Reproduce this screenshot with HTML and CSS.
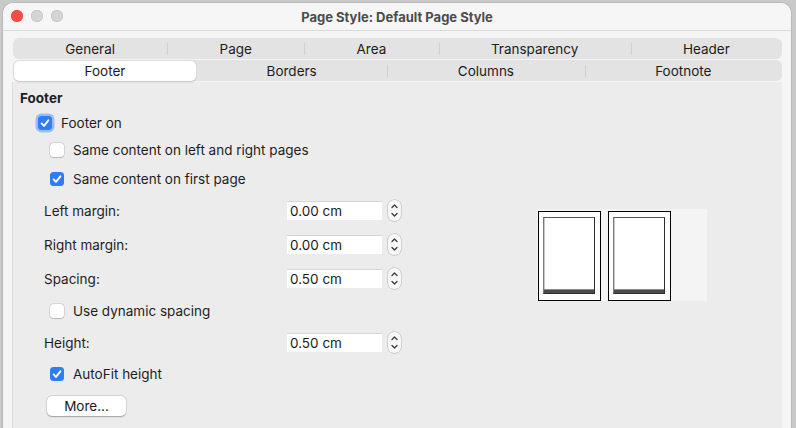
FILE: index.html
```html
<!DOCTYPE html>
<html lang="en">
<head>
<meta charset="utf-8">
<title>Page Style: Default Page Style</title>
<link rel="stylesheet" href="styles.css">
</head>
<body>
<div class="window">
  <div class="titlebar">
    <div class="lights">
      <span class="light red"></span>
      <span class="light"></span>
      <span class="light"></span>
    </div>
    <div class="title">Page Style: Default Page Style</div>
  </div>
  <div class="dialog">
    <div class="tabrow">
      <div class="tab">General</div>
      <div class="tab">Page</div>
      <div class="tab">Area</div>
      <div class="tab">Transparency</div>
      <div class="tab">Header</div>
    </div>
    <div class="tabrow">
      <div class="tab selected">Footer</div>
      <div class="tab nosep">Borders</div>
      <div class="tab">Columns</div>
      <div class="tab">Footnote</div>
    </div>
    <div class="panel">
      <div class="form">
        <div class="heading">Footer</div>
        <div class="check lvl1">
          <span class="cb on focus"><svg viewBox="0 0 14 14"><path d="M3.6 7.4 L6 9.9 L10.4 4.3"/></svg></span>
          <span>Footer on</span>
        </div>
        <div class="check lvl2">
          <span class="cb"></span>
          <span>Same content on left and right pages</span>
        </div>
        <div class="check lvl2">
          <span class="cb on"><svg viewBox="0 0 14 14"><path d="M3.6 7.4 L6 9.9 L10.4 4.3"/></svg></span>
          <span>Same content on first page</span>
        </div>
        <div class="field">
          <span class="label">Left margin:</span>
          <span class="input">0.00 cm</span>
          <span class="spin"><svg viewBox="0 0 13 21"><path d="M4 7.5 L6.5 5 L9 7.5 M4 13.5 L6.5 16 L9 13.5"/></svg></span>
        </div>
        <div class="field">
          <span class="label">Right margin:</span>
          <span class="input">0.00 cm</span>
          <span class="spin"><svg viewBox="0 0 13 21"><path d="M4 7.5 L6.5 5 L9 7.5 M4 13.5 L6.5 16 L9 13.5"/></svg></span>
        </div>
        <div class="field">
          <span class="label">Spacing:</span>
          <span class="input">0.50 cm</span>
          <span class="spin"><svg viewBox="0 0 13 21"><path d="M4 7.5 L6.5 5 L9 7.5 M4 13.5 L6.5 16 L9 13.5"/></svg></span>
        </div>
        <div class="check lvl2">
          <span class="cb"></span>
          <span>Use dynamic spacing</span>
        </div>
        <div class="field">
          <span class="label">Height:</span>
          <span class="input">0.50 cm</span>
          <span class="spin"><svg viewBox="0 0 13 21"><path d="M4 7.5 L6.5 5 L9 7.5 M4 13.5 L6.5 16 L9 13.5"/></svg></span>
        </div>
        <div class="check lvl2">
          <span class="cb on"><svg viewBox="0 0 14 14"><path d="M3.6 7.4 L6 9.9 L10.4 4.3"/></svg></span>
          <span>AutoFit height</span>
        </div>
        <div class="buttonrow">
          <span class="button">More...</span>
        </div>
      </div>
      <div class="preview">
        <div class="page"><div class="inner"><div class="foot"></div></div></div>
        <div class="page"><div class="inner"><div class="foot"></div></div></div>
      </div>
    </div>
  </div>
</div>
</body>
</html>
```

FILE: styles.css
```css
* { box-sizing: border-box; }
html, body {
  margin: 0;
  padding: 0;
  width: 796px;
  height: 428px;
  overflow: hidden;
}
body {
  background: #c9c9c9;
  font-family: Inter, "Liberation Sans", sans-serif;
  font-size: 13.5px;
  color: #1e1e1e;
}
.window {
  margin: 3px 0 0 3px;
  width: 788px;
  height: 440px;
  border-radius: 10px 10px 0 0;
  overflow: hidden;
  background: #f5f5f5;
  box-shadow: 0 0 0 0.5px #a8a8a8;
}
.titlebar {
  height: 28px;
  border-bottom: 1px solid #dadada;
  background: #f6f6f6;
  display: flex;
  align-items: center;
  justify-content: center;
  position: relative;
}
.lights {
  position: absolute;
  left: 8px;
  top: 7px;
  display: flex;
  gap: 8px;
}
.light {
  width: 12px;
  height: 12px;
  border-radius: 50%;
  background: #d4d4d4;
  box-shadow: inset 0 0 0 0.5px #b9b9b9;
}
.light.red {
  background: #fe4d49;
  box-shadow: inset 0 0 0 0.5px #e0443e;
}
.title {
  font-weight: 700;
  color: #4b4b4b;
  font-size: 13px;
}
.dialog {
  padding: 7px 9px 0 9px;
  height: 412px;
}
.tabrow {
  display: flex;
  height: 21px;
  margin: 0 0 1px 1px;
  background: #e3e3e3;
  border-radius: 6px;
  align-items: stretch;
}
.tab {
  flex: 1 1 auto;
  padding: 0 20px;
  display: flex;
  align-items: center;
  justify-content: center;
  position: relative;
  color: #1c1c1c;
}
.tab + .tab::before {
  content: "";
  position: absolute;
  left: 0;
  top: 5px;
  height: 12px;
  width: 1px;
  background: #cfcfcf;
}
.tab.nosep::before { display: none; }
.tab.selected {
  background: #fff;
  border-radius: 5px;
  margin: 1px 0 0 1px;
  box-shadow: 0 0.5px 1.5px rgba(0,0,0,0.2);
}
.panel {
  margin-top: 1px;
  height: 346px;
  background: #ececec;
  border-left: 1px solid #dcdcdc;
  display: flex;
  align-items: flex-start;
}
.form {
  width: 400px;
  padding-top: 3px;
  display: grid;
  grid-template-rows: 25px 26px 28px 30px 33px 35px 33px 32px 31px 32px 32px;
  align-items: center;
}
.heading {
  padding-left: 7px;
  font-weight: 700;
}
.check {
  display: flex;
  align-items: center;
  gap: 9px;
}
.check.lvl1 { padding-left: 25px; }
.check.lvl2 { padding-left: 37px; }
.cb {
  width: 14px;
  height: 14px;
  border-radius: 3.5px;
  background: #fff;
  box-shadow: 0 0 0 0.5px rgba(0,0,0,0.18), 0 0.5px 1px rgba(0,0,0,0.15);
  display: flex;
}
.cb.on {
  background: #2f7cf6;
  box-shadow: none;
}
.cb.focus {
  box-shadow: 0 0 0 2.5px rgba(90,150,245,0.55);
}
.cb svg {
  width: 14px;
  height: 14px;
  fill: none;
  stroke: #fff;
  stroke-width: 1.9;
  stroke-linecap: round;
  stroke-linejoin: round;
}
.field {
  display: flex;
  align-items: center;
  padding-left: 31px;
}
.label {
  width: 243px;
}
.input {
  width: 95px;
  height: 19px;
  background: #fff;
  border-top: 1px solid #d6d6d6;
  padding-left: 3px;
  display: flex;
  align-items: center;
  color: #1a1a1a;
}
.spin {
  width: 13px;
  height: 21px;
  margin-left: 6px;
  border-radius: 6px;
  background: #f8f8f8;
  box-shadow: 0 0 0 0.5px #b5b5b5, 0 0.5px 1px rgba(0,0,0,0.15);
  display: flex;
}
.spin svg {
  width: 13px;
  height: 21px;
  fill: none;
  stroke: #3a3a3a;
  stroke-width: 1.3;
  stroke-linecap: round;
  stroke-linejoin: round;
}
.buttonrow {
  padding-left: 34px;
}
.button {
  width: 79px;
  height: 20px;
  background: #fff;
  border-radius: 5px;
  box-shadow: 0 0 0 0.5px rgba(0,0,0,0.12), 0 0.5px 1.5px rgba(0,0,0,0.28);
  display: flex;
  align-items: center;
  justify-content: center;
  color: #1a1a1a;
}
.preview {
  margin: 127px 0 0 124px;
  width: 170px;
  height: 92px;
  background: #f4f4f4;
  padding: 2px 0 0 1px;
  display: flex;
  gap: 7px;
  align-items: flex-start;
}
.page {
  width: 63px;
  height: 90px;
  border: 1px solid #000;
  background: #fff;
  padding: 5px 5px 6px 4px;
}
.inner {
  width: 52px;
  height: 77px;
  border: 1px solid #2c2c2c;
  border-left-color: #7a7a7a;
  border-top-color: #555;
  display: flex;
  flex-direction: column;
  justify-content: flex-end;
  box-shadow: inset 1px 0 0 #c8c8c8;
}
.foot {
  height: 4px;
  background: #4a4a4a;
  border-top: 1px solid #8a8a8a;
}
```
